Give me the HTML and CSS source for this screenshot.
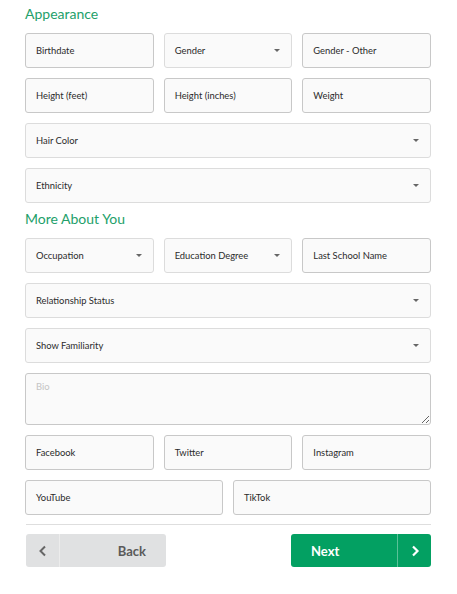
FILE: index.html
```html
<!DOCTYPE html>
<html>
<head>
<meta charset="utf-8">
<link rel="stylesheet" href="styles.css">
</head>
<body>
<div class="page">
  <h2 class="heading first">Appearance</h2>
  <div class="grid three">
    <div class="field input">Birthdate</div>
    <div class="field select">Gender</div>
    <div class="field input">Gender - Other</div>
    <div class="field input">Height (feet)</div>
    <div class="field input">Height (inches)</div>
    <div class="field input">Weight</div>
    <div class="field select span3">Hair Color</div>
    <div class="field select span3">Ethnicity</div>
  </div>

  <h2 class="heading">More About You</h2>
  <div class="grid three">
    <div class="field select">Occupation</div>
    <div class="field select">Education Degree</div>
    <div class="field input">Last School Name</div>
    <div class="field select span3">Relationship Status</div>
    <div class="field select span3">Show Familiarity</div>
    <textarea class="bio span3" placeholder="Bio"></textarea>
    <div class="field input">Facebook</div>
    <div class="field input">Twitter</div>
    <div class="field input">Instagram</div>
  </div>
  <div class="grid two">
    <div class="field input">YouTube</div>
    <div class="field input">TikTok</div>
  </div>

  <div class="divider"></div>

  <div class="actions">
    <div class="btn back">
      <span class="btn-icon">
        <svg width="10" height="12" viewBox="0 0 10 12"><path d="M7 1.5 L2.5 6 L7 10.5" fill="none" stroke="#666" stroke-width="2"/></svg>
      </span>
      <span class="btn-text">Back</span>
    </div>
    <div class="btn next">
      <span class="btn-text">Next</span>
      <span class="btn-icon">
        <svg width="10" height="12" viewBox="0 0 10 12"><path d="M3 1.5 L7.5 6 L3 10.5" fill="none" stroke="#fff" stroke-width="2.2"/></svg>
      </span>
    </div>
  </div>
</div>
</body>
</html>
```

FILE: styles.css
```css
* { box-sizing: border-box; }

html, body {
  margin: 0;
  padding: 0;
  background: #ffffff;
}

body {
  font-family: Lato, "Open Sans", Arial, sans-serif;
  color: #333;
}

.page {
  padding: 4px 26px 20px 25px;
}

.heading {
  margin: 6px 0 9px;
  font-size: 14px;
  font-weight: 400;
  line-height: 20px;
  color: #23a06a;
}

.heading.first {
  margin-top: 0;
}

.grid {
  display: grid;
  gap: 10px;
}

.grid.three {
  grid-template-columns: 1fr 1fr 1fr;
}

.grid.two {
  grid-template-columns: 1fr 1fr;
  margin-top: 10px;
}

.span3 {
  grid-column: 1 / 4;
}

.field {
  height: 35px;
  display: flex;
  align-items: center;
  padding: 0 10px;
  font-size: 9.4px;
  color: #2b2b2b;
  background: #fafafa;
  border: 1px solid #c8c8c8;
  border-radius: 3px;
  white-space: nowrap;
}

.field.select {
  border-color: #dcdcdc;
}

.field.select::after {
  content: "";
  margin-left: auto;
  margin-right: 1px;
  border-left: 3px solid transparent;
  border-right: 3px solid transparent;
  border-top: 3px solid #666;
}

.bio {
  display: block;
  width: 100%;
  height: 52px;
  padding: 7px 10px;
  font-family: Lato, "Open Sans", Arial, sans-serif;
  font-size: 9.4px;
  color: #333;
  background: #fafafa;
  border: 1px solid #c8c8c8;
  border-radius: 3px;
  outline: none;
  margin: 0;
}

.bio::placeholder {
  color: #c4c4c4;
}

.divider {
  height: 1px;
  background: #dedede;
  margin: 9px 0 9px 1px;
}

.actions {
  display: flex;
  justify-content: space-between;
  padding-left: 1px;
}

.btn {
  width: 140px;
  height: 33px;
  display: flex;
  align-items: stretch;
  border-radius: 3px;
  font-size: 13px;
  font-weight: 700;
  overflow: hidden;
}

.btn-icon {
  width: 34px;
  display: flex;
  align-items: center;
  justify-content: center;
}

.btn-text {
  flex: 1;
  display: flex;
  align-items: center;
}

.back {
  background: #e0e1e2;
  color: #5a5a5a;
}

.back .btn-icon {
  border-right: 1px solid #ececec;
}

.back .btn-text {
  justify-content: flex-end;
  padding-right: 20px;
}

.next {
  background: #03a062;
  color: #ffffff;
}

.next .btn-icon {
  border-left: 1px solid rgba(255, 255, 255, 0.35);
}

.next .btn-text {
  padding-left: 20px;
}
```
